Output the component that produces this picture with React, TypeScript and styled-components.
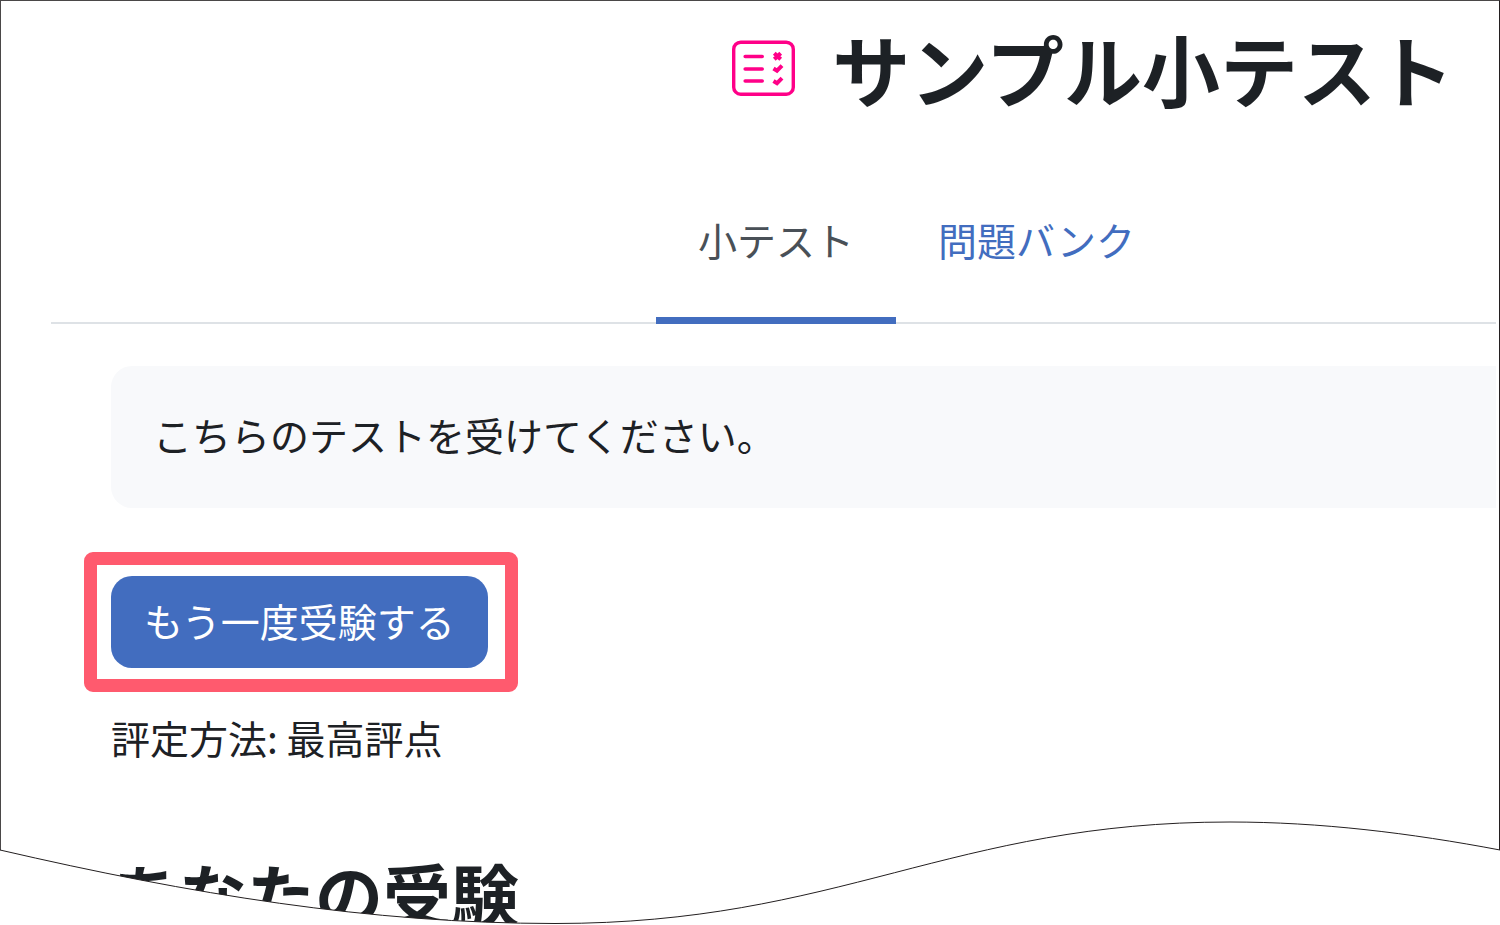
import React from "react";
import styled, { createGlobalStyle } from "styled-components";

const Global = createGlobalStyle`
  *, *::before, *::after { box-sizing: border-box; }
  body {
    margin: 0;
    background: #fff;
    color: #1d2125;
    font-family: "Noto Sans CJK JP", sans-serif;
    font-size: 39px;
    line-height: 58px;
  }
`;

const Sheet = styled.main`
  position: relative;
  overflow: hidden;
`;

const Frame = styled.div`
  border: 1px solid #4a4748;
  border-right-color: #231f20;
  border-bottom: 0;
  padding: 20px 3px 0 50px;
`;

const Header = styled.header`
  display: flex;
  align-items: center;
  justify-content: flex-end;
  gap: 34px;
  padding-right: 42px;
`;

const QuizIcon = styled.svg`
  width: 66px;
  height: 58px;
  flex: none;
`;

const Title = styled.h1`
  margin: 0;
  font-size: 78px;
  line-height: 94px;
  font-weight: 700;
  white-space: nowrap;
`;

const Tabs = styled.nav`
  display: flex;
  justify-content: flex-end;
  margin-top: 64px;
  padding-right: 319px;
  border-bottom: 2px solid #dee2e6;
`;

const Tab = styled.a<{ $active?: boolean }>`
  padding: 31px 42px 49px;
  margin-bottom: -2px;
  border-bottom: 7px solid ${(p) => (p.$active ? "#426dbf" : "transparent")};
  color: ${(p) => (p.$active ? "#495057" : "#426dbf")};
  text-decoration: none;
  white-space: nowrap;
`;

const Content = styled.div`
  display: flex;
  flex-direction: column;
  align-items: flex-start;
  padding-left: 60px;
`;

const Intro = styled.p`
  align-self: stretch;
  margin: 42px 0 0;
  padding: 39px 42px 45px;
  border-radius: 21px 0 0 21px;
  background: #f8f9fb;
`;

const Highlight = styled.div`
  margin: 44px 0 0 -27px;
  padding: 11px 17px 11px 14px;
  border: 13px solid #ff5a6e;
  border-radius: 9px;
`;

const Button = styled.button`
  display: block;
  padding: 15px 33px 19px;
  border: 0;
  border-radius: 21px;
  background: #426dbf;
  color: #fff;
  font: inherit;
  white-space: nowrap;
`;

const Grading = styled.p`
  margin: 16px 0 0;
`;

const Attempts = styled.h2`
  margin: 95px 0 0;
  font-size: 68px;
  line-height: 64px;
  font-weight: 700;
  white-space: nowrap;
`;

const TornEdge = styled.svg`
  position: absolute;
  left: 0;
  bottom: 0;
  width: 100%;
  height: 110px;
`;

export default function App() {
  return (
    <>
      <Global />
      <Sheet>
        <Frame>
          <Header>
            <QuizIcon viewBox="0 0 66 58" fill="none" stroke="#ff0088" strokeWidth="3.4" aria-hidden="true">
              <rect x="1.700" y="3.200" width="59.600" height="52" rx="7" />
              <path d="M13.200 17.500h17M13.200 30h17M13.200 42h17" strokeWidth="3.600" strokeLinecap="round" />
              <path d="M42.300 14.200l6.400 6M48.700 14.200l-6.400 6" strokeWidth="4" />
              <path d="M41.500 29.500l3.500 2.200 5-5M41.500 42l3.500 2.200 5-5" strokeWidth="4" />
            </QuizIcon>
            <Title>サンプル小テスト</Title>
          </Header>
          <Tabs>
            <Tab href="#quiz" $active aria-current="page">小テスト</Tab>
            <Tab href="#bank">問題バンク</Tab>
          </Tabs>
          <Content>
            <Intro>こちらのテストを受けてください。</Intro>
            <Highlight>
              <Button type="button">もう一度受験する</Button>
            </Highlight>
            <Grading>評定方法: 最高評点</Grading>
            <Attempts>あなたの受験</Attempts>
          </Content>
        </Frame>
        <TornEdge viewBox="0 0 1500 110" preserveAspectRatio="none" aria-hidden="true">
          <path d="M0 35C190 79 370 108.500 555 108.500C840 108.500 950 7 1230 7C1320 7 1410 18 1500 35V112H0Z" fill="#fff" />
          <path d="M0 35C190 79 370 108.500 555 108.500C840 108.500 950 7 1230 7C1320 7 1410 18 1500 35" fill="none" stroke="#231f20" />
        </TornEdge>
      </Sheet>
    </>
  );
}
